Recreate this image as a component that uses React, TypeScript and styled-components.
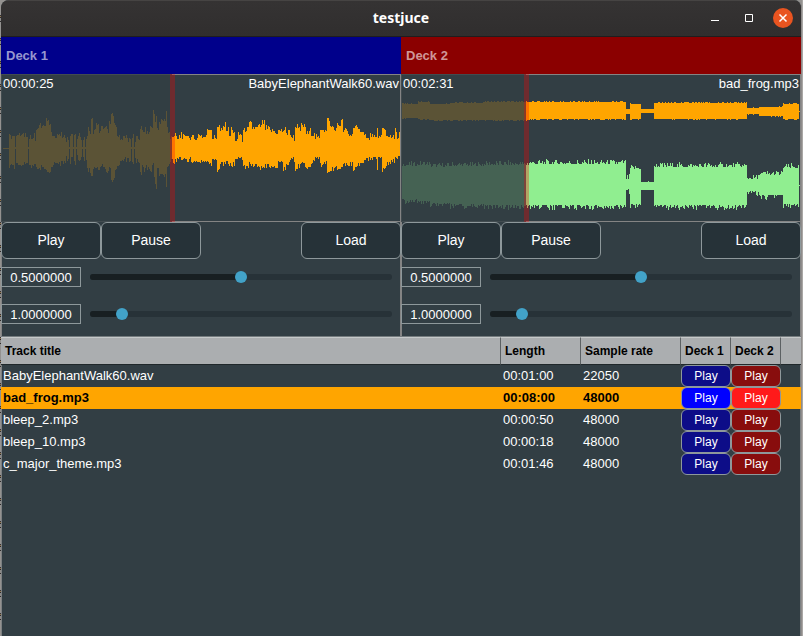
import React, { useState } from "react";
import styled, { createGlobalStyle } from "styled-components";

const colors = {
  panel: "#323e44",
  control: "#263238",
  outline: "#8e989b",
  border: "#848484",
  thumb: "#42a2c8",
  orange: "#ffa500",
  green: "#90ee90",
};

const GlobalStyle = createGlobalStyle`
  * { box-sizing: border-box; }
  body {
    margin: 0;
    background: #c4c1bf;
    font-family: "Liberation Sans", Arial, sans-serif;
    font-size: 13px;
    color: #fff;
  }
  button, input { font-family: inherit; color: inherit; margin: 0; }
`;

const Desktop = styled.div`
  min-height: 100vh;
  display: flex;
  padding: 0 1px;
  background: linear-gradient(#a9a7a5, #a9a7a5) right / 1px 100% no-repeat,
    repeating-linear-gradient(#949290 0 15px, #33313a 15px 16px, #94784a 16px 17px, #2a2a30 17px 18px, #8d8b89 18px 21px, #2d2b2c 21px 22px, #949290 22px 23px);
`;

const AppWindow = styled.div`
  flex: 1;
  min-width: 0;
  display: flex;
  flex-direction: column;
  border-right: 1px solid #8f8c8b;
  border-radius: 8px 8px 0 0;
  background: ${colors.panel};
  overflow: hidden;
`;

const TitleBar = styled.header`
  display: grid;
  grid-template-columns: 1fr auto 1fr;
  align-items: center;
  height: 37px;
  padding-bottom: 1px;
  background: linear-gradient(#353333, #302e2e);
  border-top: 1px solid #464443;
  border-bottom: 1px solid #1f1e1e;
`;

const WindowTitle = styled.h1`
  grid-column: 2;
  margin: 0;
  font: bold 14px/20px "Noto Sans", sans-serif;
`;

const WindowControls = styled.div`
  display: flex;
  justify-content: flex-end;
  gap: 14px;
  padding-right: 8px;
`;

const WindowButton = styled.button<{ $close?: boolean }>`
  width: 20px;
  height: 20px;
  padding: 0;
  border: 0;
  border-radius: 50%;
  background: ${(p) => (p.$close ? "#e95420" : "transparent")};
  svg { display: block; }
`;

const Decks = styled.div`
  display: grid;
  grid-template-columns: 1fr 1fr;
`;

const DeckPanel = styled.section`
  min-width: 0;
  display: flex;
  flex-direction: column;
`;

const DeckTitle = styled.h2<{ $color: string }>`
  margin: 0;
  padding: 0 5px;
  font-size: 13px;
  line-height: 37px;
  color: rgba(255, 255, 255, 0.6);
  background: ${(p) => p.$color};
`;

const WaveBox = styled.div`
  position: relative;
  height: 148px;
  border: 1px solid ${colors.border};
`;

const WaveSvg = styled.svg`
  display: block;
  width: 100%;
  height: 100%;
`;

const PlayedShade = styled.div`
  position: absolute;
  inset: -1px auto -1px -1px;
  background: ${colors.panel};
  opacity: 0.8;
`;

const Playhead = styled.div`
  position: absolute;
  top: -1px;
  bottom: -1px;
  width: 5px;
  margin-left: -3px;
  background: rgba(255, 0, 0, 0.3);
`;

const WaveCaption = styled.div`
  position: absolute;
  inset: 1px 1px auto;
  display: flex;
  justify-content: space-between;
  line-height: 16px;
`;

const DeckControls = styled.div`
  padding-bottom: 3px;
  box-shadow: inset 1px 0 ${colors.border}, inset -1px 0 ${colors.border};
`;

const ButtonRow = styled.div`
  display: grid;
  grid-template-columns: 1fr 1fr 1fr 1fr;
`;

const DeckButton = styled.button<{ $last?: boolean }>`
  grid-column: ${(p) => (p.$last ? 4 : "auto")};
  height: 37px;
  padding: 0 0 2px;
  border: 1px solid ${colors.outline};
  border-radius: 6px;
  background: ${colors.control};
  font-size: 14px;
`;

const SliderRow = styled.div`
  display: grid;
  grid-template-columns: 80px 1fr;
  align-items: center;
  gap: 9px;
  height: 37px;
  padding: 0 9px 1px 0;
`;

const ValueBox = styled.input`
  width: 100%;
  height: 20px;
  padding: 0;
  border: 1px solid ${colors.outline};
  background: transparent;
  font-size: 13px;
  text-align: center;
`;

const Track = styled.div`
  position: relative;
  height: 6px;
  border-radius: 3px;
  background: #273238;
`;

const TrackFill = styled.div`
  height: 100%;
  border-radius: 3px;
  background: #181f22;
`;

const Range = styled.input`
  appearance: none;
  position: absolute;
  inset: -3px -6px;
  width: calc(100% + 12px);
  height: 12px;
  background: transparent;
  &::-webkit-slider-thumb {
    appearance: none;
    width: 12px;
    height: 12px;
    border-radius: 50%;
    background: ${colors.thumb};
  }
`;

const Library = styled.main`
  flex: 1;
  border: solid #747b7e;
  border-width: 1px 0 0;
  box-shadow: inset 1px 0 #7c8082, inset -1px 0 #7c8082;
`;

const TrackTable = styled.table`
  width: 100%;
  table-layout: fixed;
  border-collapse: separate;
  border-spacing: 0;
`;

const Col = styled.col<{ $width?: number }>`
  width: ${(p) => (p.$width ? `${p.$width}px` : "auto")};
`;

const HeadCell = styled.th`
  height: 28px;
  padding: 0 4px;
  border-right: 1px solid #5c6163;
  border-top: 1px solid #c6c9ca;
  border-bottom: 1px solid #20282b;
  background: #abaeb0;
  color: #000;
  font-size: 12px;
  text-align: left;
  white-space: nowrap;
  &:last-child { border-right: 0; }
`;

const Row = styled.tr<{ $selected: boolean }>`
  background: ${(p) => (p.$selected ? colors.orange : "transparent")};
  color: ${(p) => (p.$selected ? "#000" : "#fff")};
  font-weight: ${(p) => (p.$selected ? "bold" : "normal")};
`;

const Cell = styled.td`
  height: 22px;
  padding: 0 2px;
  font-size: 13px;
  line-height: 20px;
`;

const ButtonCell = styled.td`
  height: 22px;
  padding: 0;
`;

const RowButton = styled.button<{ $color: string }>`
  display: block;
  width: 100%;
  height: 22px;
  padding: 0;
  border: 1px solid ${colors.outline};
  border-radius: 6px;
  background: ${(p) => p.$color};
  color: #fff;
  font-size: 12px;
`;

/** x position, extent above the axis, extent below the axis */
type Run = [number, number, number];

const elephantWave: Run[] = [
  [1, 0, 1], [7, 13, 18], [9, 10, 17], [10, 13, 18], [13, 1, 1], [14, 13, 15], [16, 10, 15], [17, 13, 18],
  [22, 9, 15], [23, 12, 14], [26, 1, 1], [27, 10, 17], [32, 12, 15], [33, 8, 14], [34, 18, 18], [36, 17, 21],
  [37, 24, 21], [39, 21, 16], [40, 23, 20], [42, 22, 21], [44, 27, 21], [46, 24, 25], [48, 22, 25], [49, 13, 18],
  [52, 11, 14], [56, 14, 15], [58, 10, 15], [59, 14, 11], [60, 11, 14], [64, 6, 8], [65, 9, 12], [67, 1, 1],
  [68, 10, 14], [69, 12, 10], [71, 1, 1], [72, 12, 14], [74, 1, 1], [75, 8, 8], [76, 12, 13], [79, 9, 9],
  [80, 1, 1], [81, 8, 10], [83, 1, 1], [84, 9, 13], [85, 13, 19], [86, 22, 24], [87, 14, 21], [89, 30, 26],
  [91, 15, 21], [92, 18, 18], [94, 23, 20], [97, 16, 20], [99, 20, 15], [101, 19, 19], [103, 22, 22], [105, 16, 24],
  [107, 24, 20], [109, 33, 33], [112, 26, 30], [113, 20, 20], [115, 12, 18], [118, 9, 11], [120, 9, 13], [122, 11, 10],
  [126, 6, 10], [127, 10, 13], [129, 1, 1], [130, 11, 13], [132, 1, 1], [133, 7, 8], [134, 9, 12], [138, 20, 25],
  [140, 16, 16], [142, 17, 20], [144, 15, 18], [148, 22, 24], [150, 19, 17], [151, 38, 15], [152, 34, 26], [153, 27, 37],
  [154, 32, 37], [155, 18, 21], [157, 24, 27], [159, 28, 26], [164, 37, 40], [165, 20, 20], [166, 15, 15], [168, 8, 13],
  [169, 12, 12], [172, 13, 12], [174, 9, 11], [177, 11, 10], [179, 15, 13], [180, 10, 11], [184, 13, 12], [187, 9, 10],
  [189, 10, 15], [192, 9, 12], [196, 13, 13], [200, 11, 14], [205, 19, 14], [208, 19, 15], [210, 10, 12], [215, 22, 22],
  [218, 17, 15], [221, 22, 15], [224, 18, 14], [227, 13, 15], [229, 18, 19], [231, 15, 15], [233, 8, 11], [236, 13, 10],
  [240, 7, 9], [241, 17, 17], [244, 18, 18], [247, 24, 15], [250, 20, 17], [256, 21, 19], [260, 25, 19], [263, 19, 16],
  [268, 17, 19], [273, 15, 21], [276, 17, 14], [281, 18, 20], [284, 14, 17], [286, 19, 15], [288, 11, 10], [292, 8, 14],
  [293, 21, 22], [296, 18, 17], [299, 22, 15], [302, 21, 16], [304, 14, 20], [308, 21, 19], [309, 13, 13], [313, 10, 10],
  [318, 19, 16], [322, 17, 14], [325, 28, 25], [328, 21, 20], [332, 18, 19], [335, 23, 21], [339, 26, 20], [341, 17, 16],
  [346, 13, 15], [351, 21, 20], [355, 17, 16], [361, 14, 13], [364, 9, 10], [368, 12, 11], [371, 9, 10], [375, 20, 19],
  [376, 11, 10], [380, 19, 21], [384, 12, 14], [388, 10, 12], [393, 17, 10], [395, 9, 9], [397, 15, 9], [399, 8, 11],
];

const frogUpper: Run[] = [
  [0, 7, 7], [16, 9, 8], [28, 7, 9], [48, 8, 9], [82, 9, 9], [127, 9, 8], [224, 2, 3], [228, 7, 8],
  [239, 2, 2], [252, 8, 8], [345, 3, 3], [357, 4, 5], [381, 7, 8], [397, 0, 1],
];

const frogLower: Run[] = [
  [0, 20, 15], [16, 21, 17], [28, 19, 19], [48, 20, 20], [82, 21, 21], [127, 22, 21], [224, 7, 5], [228, 17, 20],
  [239, 3, 5], [252, 19, 21], [345, 7, 7], [357, 11, 11], [381, 18, 20], [397, 0, 1],
];

const noise = (n: number) => {
  const s = Math.sin(n * 12.9898) * 43758.5453;
  return s - Math.floor(s);
};

/** Builds one closed vertical bar per pixel column, with a ragged edge. */
function wavePath(runs: Run[], axis: number, rough: number) {
  let d = "";
  for (let i = 0; i < runs.length; i++) {
    const [start, up, down] = runs[i];
    const end = i + 1 < runs.length ? runs[i + 1][0] : 400;
    for (let x = start; x < end; x++) {
      const ragged = up > 6 ? rough : up > 2 ? 1 : 0;
      const a = up + Math.round((noise(x + axis) ** 2) * ragged - ragged / 4);
      const b = down + Math.round((noise(x * 3 + axis) ** 2) * ragged - ragged / 4);
      d += `M${x} ${axis - a}h1v${a + b}h-1z`;
    }
  }
  return d;
}

interface Channel { runs: Run[]; axis: number; color: string; rough: number }
interface DeckData {
  name: string; color: string; time: string; file: string; progress: number; channels: Channel[];
}

const decks: DeckData[] = [
  {
    name: "Deck 1", color: "#00008b", time: "00:00:25", file: "BabyElephantWalk60.wav", progress: 43,
    channels: [{ runs: elephantWave, axis: 73, color: colors.orange, rough: 5 }],
  },
  {
    name: "Deck 2", color: "#8b0000", time: "00:02:31", file: "bad_frog.mp3", progress: 31.5,
    channels: [
      { runs: frogUpper, axis: 36, color: colors.orange, rough: 2 },
      { runs: frogLower, axis: 110, color: colors.green, rough: 5 },
    ],
  },
];

const tracks = [
  { title: "BabyElephantWalk60.wav", length: "00:01:00", rate: "22050" },
  { title: "bad_frog.mp3", length: "00:08:00", rate: "48000" },
  { title: "bleep_2.mp3", length: "00:00:50", rate: "48000" },
  { title: "bleep_10.mp3", length: "00:00:18", rate: "48000" },
  { title: "c_major_theme.mp3", length: "00:01:46", rate: "48000" },
];

function Slider({ label, initial, max }: { label: string; initial: number; max: number }) {
  const [value, setValue] = useState(initial);
  return (
    <SliderRow>
      <ValueBox aria-label={`${label} value`} value={value.toFixed(7)} readOnly />
      <Track>
        <TrackFill style={{ width: `${(value / max) * 100}%` }} />
        <Range
          type="range" aria-label={label} min={0} max={max} step={0.01} value={value}
          onChange={(e) => setValue(Number(e.target.value))}
        />
      </Track>
    </SliderRow>
  );
}

function Deck({ deck }: { deck: DeckData }) {
  return (
    <DeckPanel>
      <DeckTitle $color={deck.color}>{deck.name}</DeckTitle>
      <WaveBox>
        <WaveSvg viewBox="0 0 398 146" preserveAspectRatio="none" shapeRendering="crispEdges" aria-hidden="true">
          {deck.channels.map((c) => (
            <path key={c.axis} d={wavePath(c.runs, c.axis, c.rough)} fill={c.color} />
          ))}
        </WaveSvg>
        <PlayedShade style={{ width: `${deck.progress}%` }} />
        <Playhead style={{ left: `${deck.progress}%` }} />
        <WaveCaption>
          <span>{deck.time}</span>
          <span>{deck.file}</span>
        </WaveCaption>
      </WaveBox>
      <DeckControls>
        <ButtonRow>
          <DeckButton>Play</DeckButton>
          <DeckButton>Pause</DeckButton>
          <DeckButton $last>Load</DeckButton>
        </ButtonRow>
        <Slider label={`${deck.name} volume`} initial={0.5} max={1} />
        <Slider label={`${deck.name} speed`} initial={1} max={9.3} />
      </DeckControls>
    </DeckPanel>
  );
}

export default function App() {
  const [selected, setSelected] = useState(1);
  return (
    <>
      <GlobalStyle />
      <Desktop>
        <AppWindow>
          <TitleBar>
            <WindowTitle>testjuce</WindowTitle>
            <WindowControls>
              <WindowButton aria-label="Minimize">
                <svg width="20" height="20"><path d="M6 12h8v1H6z" fill="#fff" /></svg>
              </WindowButton>
              <WindowButton aria-label="Maximize">
                <svg width="20" height="20"><path d="M6.5 6.5h7v7h-7z" fill="none" stroke="#fff" /></svg>
              </WindowButton>
              <WindowButton $close aria-label="Close">
                <svg width="20" height="20"><path d="M6.5 6.5l7 7M13.5 6.5l-7 7" stroke="#fff" strokeWidth="1.5" /></svg>
              </WindowButton>
            </WindowControls>
          </TitleBar>
          <Decks>
            {decks.map((d) => <Deck key={d.name} deck={d} />)}
          </Decks>
          <Library>
            <TrackTable>
              <colgroup>
                <Col /><Col $width={80} /><Col $width={100} /><Col $width={50} /><Col $width={50} /><Col $width={20} />
              </colgroup>
              <thead>
                <tr>
                  <HeadCell>Track title</HeadCell>
                  <HeadCell>Length</HeadCell>
                  <HeadCell>Sample rate</HeadCell>
                  <HeadCell>Deck 1</HeadCell>
                  <HeadCell>Deck 2</HeadCell>
                  <HeadCell />
                </tr>
              </thead>
              <tbody>
                {tracks.map((t, i) => (
                  <Row key={t.title} $selected={i === selected} onClick={() => setSelected(i)}>
                    <Cell>{t.title}</Cell>
                    <Cell>{t.length}</Cell>
                    <Cell>{t.rate}</Cell>
                    <ButtonCell><RowButton $color={i === selected ? "#0000ff" : "#0d0d88"}>Play</RowButton></ButtonCell>
                    <ButtonCell><RowButton $color={i === selected ? "#ff1a1a" : "#880d0d"}>Play</RowButton></ButtonCell>
                    <ButtonCell />
                  </Row>
                ))}
              </tbody>
            </TrackTable>
          </Library>
        </AppWindow>
      </Desktop>
    </>
  );
}
